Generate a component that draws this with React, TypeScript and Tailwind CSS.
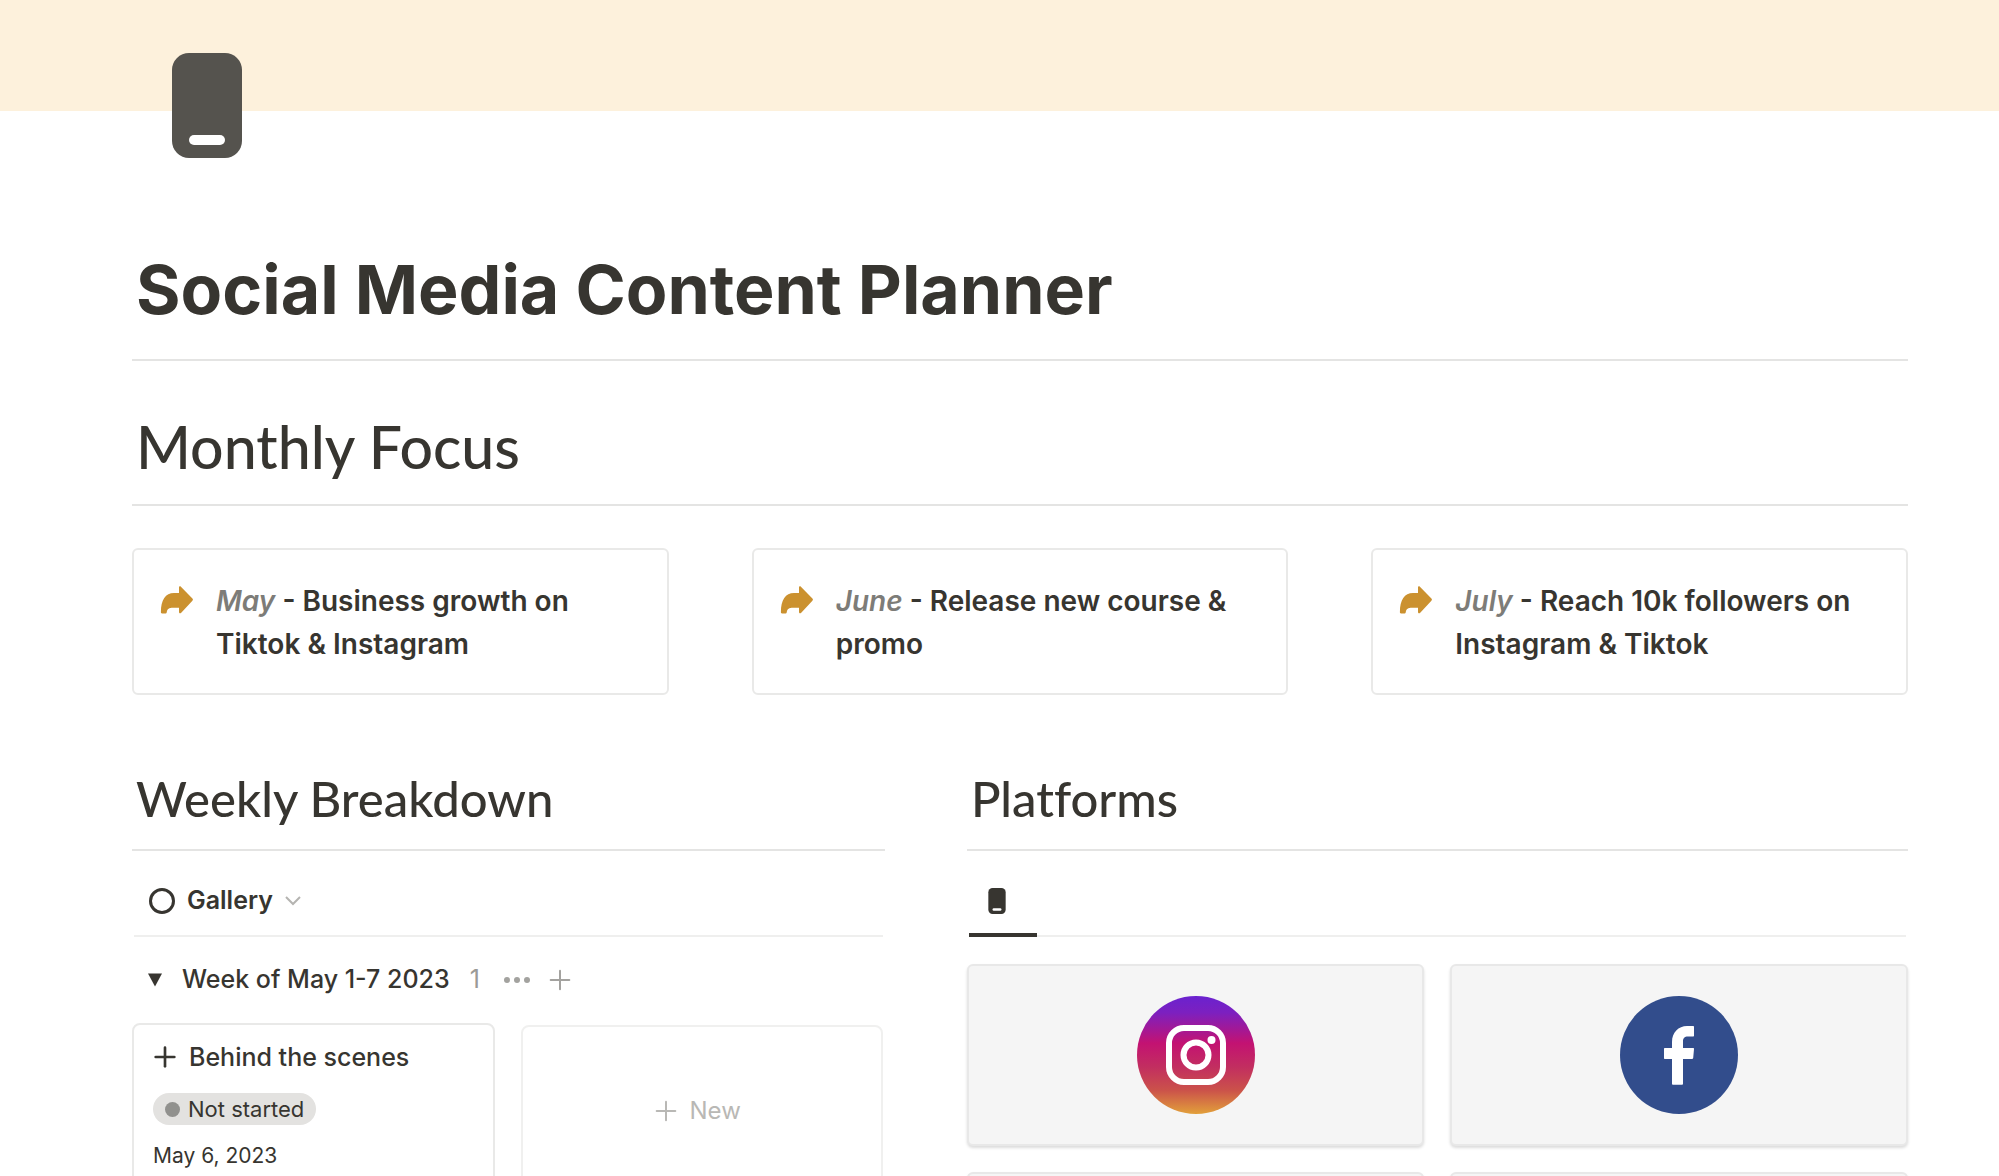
import type { ReactNode } from "react";
import { Plus } from "lucide-react";

interface Focus {
  month: string;
  goal: string;
}

const focuses: Focus[] = [
  { month: "May", goal: "Business growth on Tiktok & Instagram" },
  { month: "June", goal: "Release new course & promo" },
  { month: "July", goal: "Reach 10k followers on Instagram & Tiktok" },
];

function PhoneIcon({ className }: { className: string }) {
  return (
    <svg viewBox="0 0 70 105" className={className} aria-hidden="true">
      <rect width="70" height="105" rx="17" fill="currentColor" />
      <rect x="17" y="82" width="36" height="10" rx="5" fill="#fff" />
    </svg>
  );
}

function ArrowIcon() {
  return (
    <svg viewBox="0 0 34 28" className="mt-1.5 h-7 w-[34px] shrink-0 text-[#cb912f]" aria-hidden="true">
      <path
        d="M19 1.400c0-1.200 1.200-1.500 1.900-.7l11.500 11.700c.7.8.7 1.600 0 2.400L21 26.900c-.8.8-2 .4-2-.8v-4.300h-6c-4 0-5.600 1-6.300 4.600-.1.700-.5 1-1.100 1H2c-.7 0-1.100-.5-1.100-1.200C.900 14 5.500 7 14 7h5z"
        fill="currentColor"
      />
    </svg>
  );
}

function InstagramLogo() {
  return (
    <svg viewBox="0 0 118 118" className="size-[118px]" aria-hidden="true">
      <defs>
        <linearGradient id="ig" x1="0" y1="0" x2="0" y2="1">
          <stop offset="0" stopColor="#6a22cf" />
          <stop offset="0.14" stopColor="#7c20c0" />
          <stop offset="0.4" stopColor="#c31272" />
          <stop offset="0.6" stopColor="#c22e60" />
          <stop offset="0.8" stopColor="#cb524a" />
          <stop offset="1" stopColor="#e2a03a" />
        </linearGradient>
      </defs>
      <circle cx="59" cy="59" r="59" fill="url(#ig)" />
      <g fill="none" stroke="#fff" strokeWidth="6">
        <rect x="32" y="32" width="54" height="54" rx="15" />
        <circle cx="59" cy="59" r="12.500" />
      </g>
      <circle cx="74.500" cy="44" r="4" fill="#fff" />
    </svg>
  );
}

function FacebookLogo() {
  return (
    <svg viewBox="0 0 118 118" className="size-[118px]" aria-hidden="true">
      <circle cx="59" cy="59" r="59" fill="#324d8c" />
      <path
        d="M52 87.500V63h-7c-.7 0-1-.3-1-1V53c0-.7.3-1 1-1h7v-6c0-9.500 6.500-16 15-16h6c.7 0 1 .3 1 1v8.500c0 .7-.3 1-1 1h-5c-3.500 0-5 1.500-5 5V52h10c.7 0 1.100.4 1 1l-.8 9c-.1.700-.5 1-1.200 1h-9v24.500c0 .9-.4 1.300-1.200 1.300h-8.600c-.8 0-1.200-.4-1.200-1.300z"
        fill="#fff"
      />
    </svg>
  );
}

function SectionHeading({ children }: { children: ReactNode }) {
  return (
    <h2 className="border-b-2 border-[#e4e4e3] pb-[22px] pl-1 font-[Lato,sans-serif] text-[49px] leading-[58px] font-medium [font-variant-ligatures:none]">
      {children}
    </h2>
  );
}

function FocusCard({ month, goal }: Focus) {
  return (
    <div className="flex gap-[22px] rounded-md border-2 border-[#e9e9e8] pt-[30px] pr-9 pb-[27px] pl-[26px]">
      <ArrowIcon />
      <p className="text-[28px] leading-[43px] font-semibold">
        <em className="text-[#7d7c78]">{month}</em> - {goal}
      </p>
    </div>
  );
}

function PlatformCard({ label, children }: { label: string; children?: ReactNode }) {
  return (
    <a
      href="#"
      aria-label={label}
      className="flex h-[182px] items-center justify-center rounded-md border-2 border-[#e8e8e8] bg-[#f5f5f5] shadow-[0_2px_3px_rgba(0,0,0,0.14)]"
    >
      {children}
    </a>
  );
}

export default function App() {
  return (
    <main className="h-screen overflow-hidden bg-white font-[Inter,sans-serif] text-[#373530]">
      <div className="h-[111px] bg-[#fdf1dc]" />

      <div className="pr-[91px] pl-[132px]">
        <PhoneIcon className="relative -mt-[58px] ml-10 h-[105px] w-[70px] text-[#55534e]" />

        <h1 className="mt-[89px] border-b-2 border-[#e4e4e3] pb-7 pl-1 text-[68px] leading-[84px] font-bold">
          Social Media Content Planner
        </h1>
        <h2 className="mt-[50px] border-b-2 border-[#e4e4e3] pb-[22px] pl-1 font-[Lato,sans-serif] text-[59px] leading-[71px] font-medium">
          Monthly Focus
        </h2>

        <div className="mt-[42px] grid grid-cols-3 gap-[83px]">
          {focuses.map((focus) => (
            <FocusCard key={focus.month} {...focus} />
          ))}
        </div>

        <div className="mt-[74px] grid grid-cols-[4fr_5fr] gap-[82px]">
          <section>
            <SectionHeading>Weekly Breakdown</SectionHeading>

            <div className="mx-0.5 flex h-[86px] items-center border-b-2 border-[#efefee] pt-4 pl-[15px]">
              <button className="flex items-center gap-3 text-[25px] font-semibold">
                <span className="size-[26px] rounded-full border-3 border-current" />
                Gallery
                <svg viewBox="0 0 16 10" className="h-2.5 w-4 text-[#b5b4b1]" fill="none" aria-hidden="true">
                  <path d="M1 1l7 7 7-7" stroke="currentColor" strokeWidth="2" />
                </svg>
              </button>
            </div>

            {/* Group header */}
            <div className="flex h-[86px] items-center pl-4">
              <button className="flex items-center gap-5 text-[25px] font-medium">
                <svg viewBox="0 0 14 14" className="size-3.5" aria-hidden="true">
                  <path d="M0 0.500h14L7 13.500z" fill="currentColor" />
                </svg>
                Week of May 1-7 2023
              </button>
              <span className="ml-5 text-[25px] text-[#9b9a97]">1</span>
              <button aria-label="Group options" className="ml-6 text-[#a3a29f]">
                <svg viewBox="0 0 26 6" className="h-1.5 w-[26px]" fill="currentColor" aria-hidden="true">
                  <circle cx="3" cy="3" r="3" />
                  <circle cx="13" cy="3" r="3" />
                  <circle cx="23" cy="3" r="3" />
                </svg>
              </button>
              <button aria-label="Add to group" className="ml-3.5 text-[#a3a29f]">
                <Plus className="size-8" strokeWidth={1.5} />
              </button>
            </div>

            <div className="grid grid-cols-2 gap-[26px]">
              <article className="h-[260px] rounded-lg border-2 border-[#e9e9e8] px-[19px] pt-3">
                <h3 className="flex items-center gap-2 text-[25px] leading-10 font-medium">
                  <Plus className="-ml-1 size-8" strokeWidth={2} />
                  Behind the scenes
                </h3>
                <span className="mt-4 flex h-8 w-fit items-center gap-2 rounded-full bg-[#e3e2e0] px-3 text-[22px]">
                  <span className="size-[15px] rounded-full bg-[#91918e]" />
                  Not started
                </span>
                <time className="mt-3 block text-[21px] leading-[38px]">May 6, 2023</time>
              </article>
              <button className="mt-0.5 mr-0.5 flex h-[258px] justify-center gap-2 rounded-lg border-2 border-[#f0f0ef] pt-[68px] pr-3.5 text-[24px] leading-[32px] text-[#b9b8b5]">
                <Plus className="size-8" strokeWidth={1.5} />
                New
              </button>
            </div>
          </section>

          <section>
            <SectionHeading>Platforms</SectionHeading>

            <div className="mx-0.5 flex h-[86px] border-b-2 border-[#efefee]">
              <button
                aria-label="Platforms view"
                className="-mb-0.5 flex w-[68px] items-center border-b-4 border-current pt-[18px] pl-[19px]"
              >
                <PhoneIcon className="h-[26px] w-[18px]" />
              </button>
            </div>

            <div className="mt-[27px] grid grid-cols-2 gap-[26px]">
              <PlatformCard label="Instagram">
                <InstagramLogo />
              </PlatformCard>
              <PlatformCard label="Facebook">
                <FacebookLogo />
              </PlatformCard>
              <PlatformCard label="Third platform" />
              <PlatformCard label="Fourth platform" />
            </div>
          </section>
        </div>
      </div>
    </main>
  );
}
